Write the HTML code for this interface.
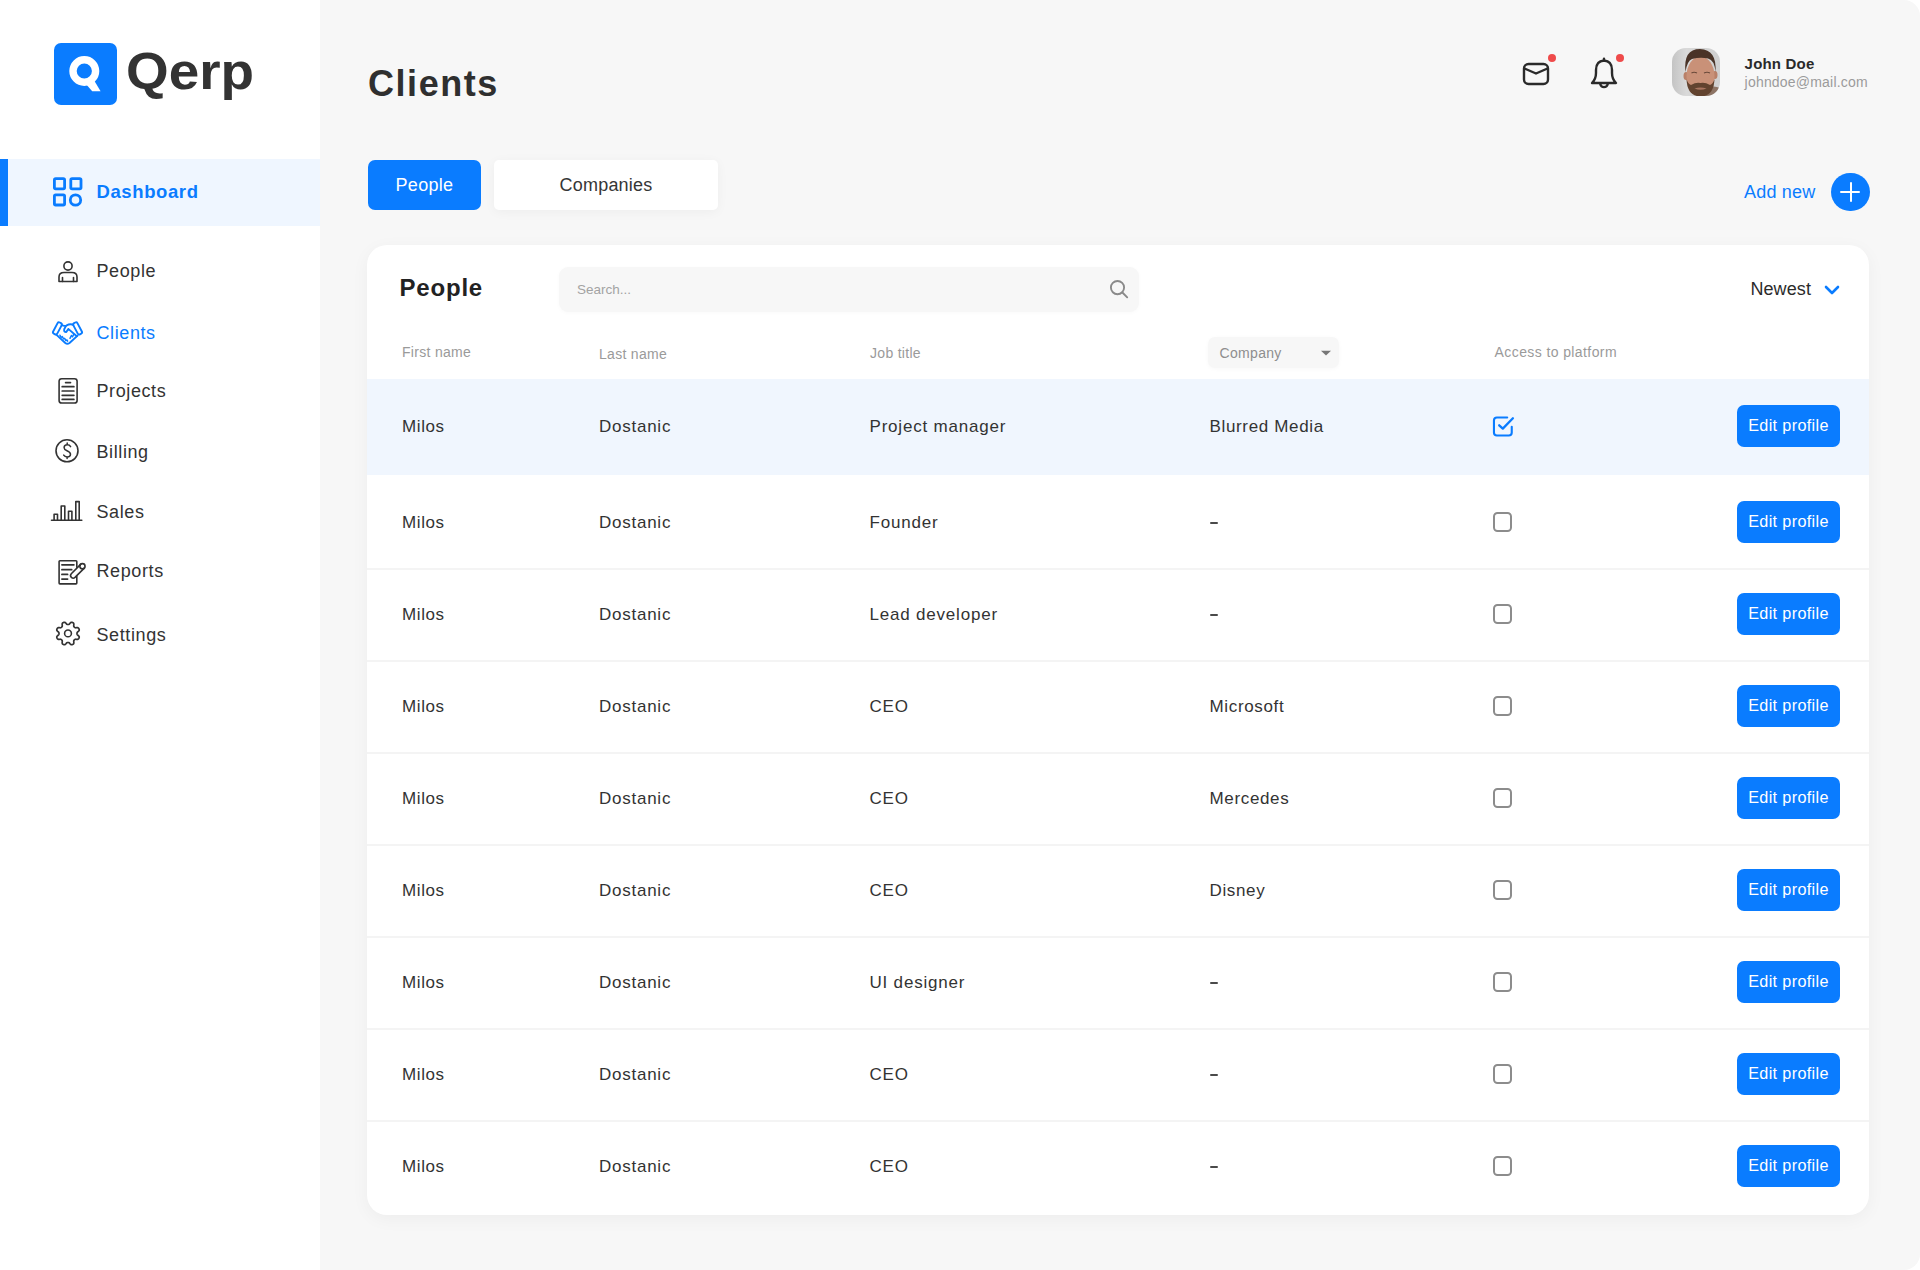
<!DOCTYPE html>
<html><head><meta charset="utf-8"><title>Qerp Clients</title>
<style>
html,body{margin:0;padding:0;}
body{width:1920px;height:1270px;position:relative;overflow:hidden;background:#fff;font-family:"Liberation Sans",sans-serif;}
.t{position:absolute;white-space:nowrap;line-height:1;}
.r{position:absolute;}
</style></head><body>
<div class="r" style="left:0px;top:0px;width:320px;height:1270px;background:#fff;"></div>
<div class="r" style="left:54px;top:43px;width:63px;height:62px;background:#0a7cff;border-radius:7px;"></div>
<svg class="r" style="left:0;top:0" width="130" height="120" viewBox="0 0 130 120">
<circle cx="84.3" cy="71" r="11.3" fill="none" stroke="#fff" stroke-width="7.4"/>
<polygon points="86.3,84.5 94.3,80.8 100.6,91.2 92.2,91.2" fill="#fff"/>
</svg>
<div class="t" style="left:125.5px;top:45.18px;font-size:52px;color:#333;font-weight:700;transform:scaleX(1.055);transform-origin:0 0;">Qerp</div>
<div class="r" style="left:0px;top:159px;width:320px;height:67px;background:#eff6ff;"></div>
<div class="r" style="left:0px;top:159px;width:8px;height:67px;background:#0a7cff;"></div>
<svg class="r" style="left:50px;top:174px" width="36" height="36" viewBox="0 0 36 36" fill="none" stroke="#0a7cff" stroke-width="2.8">
<rect x="4.4" y="4.6" width="10.2" height="10.2" rx="1.3"/><rect x="20.8" y="4.6" width="10.2" height="10.2" rx="1.3"/>
<rect x="4.4" y="20.8" width="10.2" height="10.2" rx="1.3"/><circle cx="25.5" cy="26" r="5.2"/>
</svg>
<div class="t" style="left:96.5px;top:183.34px;font-size:18.5px;color:#0a7cff;font-weight:700;letter-spacing:0.6px;">Dashboard</div>
<div class="t" style="left:96.5px;top:261.76px;font-size:18px;color:#333333;font-weight:400;letter-spacing:0.6px;">People</div>
<div class="t" style="left:96.5px;top:323.76px;font-size:18px;color:#0a7cff;font-weight:400;letter-spacing:0.6px;">Clients</div>
<div class="t" style="left:96.5px;top:382.16px;font-size:18px;color:#333333;font-weight:400;letter-spacing:0.6px;">Projects</div>
<div class="t" style="left:96.5px;top:442.56px;font-size:18px;color:#333333;font-weight:400;letter-spacing:0.6px;">Billing</div>
<div class="t" style="left:96.5px;top:502.96px;font-size:18px;color:#333333;font-weight:400;letter-spacing:0.6px;">Sales</div>
<div class="t" style="left:96.5px;top:562.46px;font-size:18px;color:#333333;font-weight:400;letter-spacing:0.6px;">Reports</div>
<div class="t" style="left:96.5px;top:625.76px;font-size:18px;color:#333333;font-weight:400;letter-spacing:0.6px;">Settings</div>
<svg class="r" style="left:0;top:0" width="100" height="700" viewBox="0 0 100 700" fill="none" stroke="#333" stroke-width="1.6" stroke-linejoin="round" stroke-linecap="round">
<!-- people -->
<circle cx="68" cy="266" r="4.1"/>
<path d="M59 281.5 V277 Q59 272.5 64 272.5 H72 Q77 272.5 77 277 V281.5 Z"/>
<path d="M62.5 281.5 V277.5 M73.5 281.5 V277.5"/>
<!-- projects -->
<rect x="59.1" y="378.7" width="18" height="24.3" rx="2.6"/>
<path stroke-width="1.7" d="M65.6 382.6 H70.5 M62.2 386.7 H73.9 M62.2 391 H73.9 M62.2 395.3 H73.9 M62.2 399.4 H73.9"/>
<!-- billing -->
<circle cx="67" cy="450.8" r="11"/>
<path stroke-width="1.5" d="M70.6 446.6 Q69.6 444.8 67.2 444.8 Q64.1 444.8 64.1 447.7 Q64.1 449.4 67 450.7 Q70.5 452.2 70.5 454.2 Q70.5 456.9 67.2 456.9 Q64.8 456.9 63.7 455.1 M67.2 443 V444.8 M67.1 456.9 V458.6"/>
<!-- sales -->
<path d="M51.5 520.2 H81.8"/>
<path d="M54.1 520.2 V514.2 H57.5 V520.2 M61.2 520.2 V506 H64.8 V520.2 M68.5 520.2 V511.2 H71.9 V520.2 M75.8 520.2 V501.6 H79.2 V520.2"/>
<!-- reports -->
<path d="M76.8 567.2 V561.6 Q76.8 560.8 76 560.8 H59.9 Q59.1 560.8 59.1 561.6 V583.1 Q59.1 583.9 59.9 583.9 H76 Q76.8 583.9 76.8 583.1 V576.3"/>
<path stroke-width="1.7" d="M61.9 564.8 H73.9 M61.9 569.7 H71.7 M61.9 574.4 H67.6 M61.9 579.1 H67.6"/>
<path d="M80.6 564.4 L71.3 573.7 Q69.6 575.6 71.4 577.4 Q73.2 579.1 75 577.4 L84.3 568.1"/>
<circle cx="82.45" cy="566.25" r="2.6"/>
<!-- settings -->
<circle cx="68" cy="633.4" r="3.4"/>
</svg>
<svg class="r" style="left:0;top:0" width="100" height="700" viewBox="0 0 100 700" fill="none" stroke="#333" stroke-width="1.7" stroke-linejoin="round">
<path d="M77.00 633.50 L77.01 633.85 L77.07 634.21 L77.23 634.59 L77.61 635.02 L78.25 635.54 L78.86 636.11 L79.17 636.65 L79.23 637.15 L79.15 637.61 L78.99 638.05 L78.79 638.47 L78.52 638.86 L78.13 639.17 L77.52 639.34 L76.69 639.31 L75.87 639.22 L75.30 639.25 L74.92 639.41 L74.62 639.62 L74.36 639.86 L74.12 640.12 L73.91 640.42 L73.75 640.80 L73.72 641.37 L73.81 642.19 L73.84 643.02 L73.67 643.63 L73.36 644.02 L72.97 644.29 L72.55 644.49 L72.11 644.65 L71.65 644.73 L71.15 644.67 L70.61 644.36 L70.04 643.75 L69.52 643.11 L69.09 642.73 L68.71 642.57 L68.35 642.51 L68.00 642.50 L67.65 642.51 L67.29 642.57 L66.91 642.73 L66.48 643.11 L65.96 643.75 L65.39 644.36 L64.85 644.67 L64.35 644.73 L63.89 644.65 L63.45 644.49 L63.03 644.29 L62.64 644.02 L62.33 643.63 L62.16 643.02 L62.19 642.19 L62.28 641.37 L62.25 640.80 L62.09 640.42 L61.88 640.12 L61.64 639.86 L61.38 639.62 L61.08 639.41 L60.70 639.25 L60.13 639.22 L59.31 639.31 L58.48 639.34 L57.87 639.17 L57.48 638.86 L57.21 638.47 L57.01 638.05 L56.85 637.61 L56.77 637.15 L56.83 636.65 L57.14 636.11 L57.75 635.54 L58.39 635.02 L58.77 634.59 L58.93 634.21 L58.99 633.85 L59.00 633.50 L58.99 633.15 L58.93 632.79 L58.77 632.41 L58.39 631.98 L57.75 631.46 L57.14 630.89 L56.83 630.35 L56.77 629.85 L56.85 629.39 L57.01 628.95 L57.21 628.53 L57.48 628.14 L57.87 627.83 L58.48 627.66 L59.31 627.69 L60.13 627.78 L60.70 627.75 L61.08 627.59 L61.38 627.38 L61.64 627.14 L61.88 626.88 L62.09 626.58 L62.25 626.20 L62.28 625.63 L62.19 624.81 L62.16 623.98 L62.33 623.37 L62.64 622.98 L63.03 622.71 L63.45 622.51 L63.89 622.35 L64.35 622.27 L64.85 622.33 L65.39 622.64 L65.96 623.25 L66.48 623.89 L66.91 624.27 L67.29 624.43 L67.65 624.49 L68.00 624.50 L68.35 624.49 L68.71 624.43 L69.09 624.27 L69.52 623.89 L70.04 623.25 L70.61 622.64 L71.15 622.33 L71.65 622.27 L72.11 622.35 L72.55 622.51 L72.97 622.71 L73.36 622.98 L73.67 623.37 L73.84 623.98 L73.81 624.81 L73.72 625.63 L73.75 626.20 L73.91 626.58 L74.12 626.88 L74.36 627.14 L74.62 627.38 L74.92 627.59 L75.30 627.75 L75.87 627.78 L76.69 627.69 L77.52 627.66 L78.13 627.83 L78.52 628.14 L78.79 628.53 L78.99 628.95 L79.15 629.39 L79.23 629.85 L79.17 630.35 L78.86 630.89 L78.25 631.46 L77.61 631.98 L77.23 632.41 L77.07 632.79 L77.01 633.15 Z"/></svg>
<svg class="r" style="left:0;top:0" width="100" height="400" viewBox="0 0 100 400" fill="none" stroke="#0a7cff" stroke-width="1.9" stroke-linejoin="round" stroke-linecap="round">
<rect x="-2.3" y="-6.3" width="4.6" height="12.6" rx="1.6" transform="translate(57.4 328.4) rotate(28)"/>
<rect x="-2.3" y="-6.3" width="4.6" height="12.6" rx="1.6" transform="translate(77.6 328.4) rotate(-28)"/>
<path d="M61.6 325 Q64 326.3 66.2 325.6 Q70.5 323.3 73.4 325"/>
<path d="M66 325.9 L64.2 329.3 Q63.7 332.2 66.3 332 L68.3 328.9 L76.8 336.2"/>
<path d="M56.3 334.6 L65.3 343 Q67.3 344.6 69.5 343 L77.6 335.6"/>
<path stroke-width="1.5" d="M59.9 335.2 L61.2 337.4 M62.3 336.6 L63.6 338.9 M64.6 338.3 L65.9 340.5 M66.9 340 L67.6 341.2 M71.4 335.5 L70 338.3 M73.6 334.6 L72.4 336.8"/>
</svg>
<div class="r" style="left:320px;top:0px;width:1600px;height:1270px;background:#f7f7f7;border-radius:0 16px 16px 0;"></div>
<div class="t" style="left:368px;top:65.93px;font-size:36px;color:#2f2f2f;font-weight:700;letter-spacing:1.55px;">Clients</div>
<div class="r" style="left:368px;top:160px;width:113px;height:50px;background:#0a7cff;border-radius:7px;"></div>
<div class="t" style="left:124.5px;width:600px;text-align:center;top:176.16px;font-size:18px;color:#fff;font-weight:400;letter-spacing:0.3px;">People</div>
<div class="r" style="left:494px;top:160px;width:224px;height:50px;background:#fff;border-radius:5px;box-shadow:0 2px 12px rgba(0,0,0,0.045);"></div>
<div class="t" style="left:306px;width:600px;text-align:center;top:176.16px;font-size:18px;color:#363636;font-weight:400;letter-spacing:0.2px;">Companies</div>
<svg class="r" style="left:1500px;top:40px" width="140" height="60" viewBox="1500 40 140 60" fill="none" stroke="#2a2a2a" stroke-width="2.4" stroke-linejoin="round" stroke-linecap="round">
<rect x="1524" y="64" width="24" height="20" rx="4.5"/>
<path d="M1524.5 68.5 L1536 73.5 L1547.5 68.5"/>
<path d="M1592 83 Q1596 79 1596 73 V70 Q1596 61 1604 60.5 Q1612 61 1612 70 V73 Q1612 79 1616 83 Z"/>
<path d="M1600.3 84.3 A3.8 3.6 0 0 0 1607.7 84.3"/><path d="M1604 58.8 V60.4"/>
</svg>
<div class="r" style="left:1548px;top:54px;width:8px;height:8px;background:#ef4b4b;border-radius:50%;"></div>
<div class="r" style="left:1616px;top:54px;width:8px;height:8px;background:#ef4b4b;border-radius:50%;"></div>
<svg class="r" style="left:1672px;top:48px" width="48" height="48" viewBox="0 0 48 48">
<defs><clipPath id="av"><rect x="0" y="0" width="48" height="48" rx="14"/></clipPath>
<linearGradient id="avbg" x1="0" y1="0" x2="1" y2="0"><stop offset="0" stop-color="#c4c4c4"/><stop offset="0.3" stop-color="#d9d9d9"/><stop offset="1" stop-color="#cfcfcf"/></linearGradient></defs>
<g clip-path="url(#av)">
<rect width="48" height="48" fill="url(#avbg)"/>
<path d="M34 40 Q42 37 48 40 V48 H30 Z" fill="#8d7465"/>
<ellipse cx="14" cy="28" rx="2.5" ry="4" fill="#b98068"/>
<ellipse cx="43" cy="27" rx="2.5" ry="4" fill="#b98068"/>
<ellipse cx="28.5" cy="28" rx="14" ry="19.5" fill="#c99178"/>
<path d="M13.5 24 Q11 1 28 1 Q45 1.5 43.5 24 Q42.5 12 36 10.5 Q28 9 20 11 Q15 13 13.5 24 Z" fill="#4a3327"/>
<path d="M14.5 31 Q15 48 28.5 48.5 Q42 48 42.5 31 Q41 36 38 37 Q33 34 28.5 35 Q24 34 19 37 Q16 36 14.5 31 Z" fill="#62432f"/>
<path d="M22.5 40.5 Q28.5 38.5 34.5 40.5 Q28.5 43 22.5 40.5 Z" fill="#a87560"/>
<path d="M19.5 25 Q22 23.5 25 25 M32 25 Q35 23.5 38 25" stroke="#6a4a3a" stroke-width="1.2" fill="none"/>
</g></svg>
<div class="t" style="left:1744.6px;top:55.90px;font-size:15px;color:#2a2a2a;font-weight:700;letter-spacing:0.2px;">John Doe</div>
<div class="t" style="left:1744.6px;top:75.15px;font-size:14px;color:#9b9b9b;font-weight:400;letter-spacing:0.2px;">johndoe@mail.com</div>
<div class="t" style="left:1744px;top:183.06px;font-size:18px;color:#0a7cff;font-weight:400;letter-spacing:0.2px;">Add new</div>
<div class="r" style="left:1831.3px;top:172.6px;width:38.6px;height:38.6px;background:#0a7cff;border-radius:50%;"></div>
<div class="r" style="left:1840.4px;top:190.85px;width:20px;height:2.6px;background:#fff;border-radius:1.3px;"></div>
<div class="r" style="left:1849.6px;top:182px;width:2.6px;height:19.8px;background:#fff;border-radius:1.3px;"></div>
<div class="r" style="left:367px;top:245px;width:1502px;height:970px;background:#fff;border-radius:20px;box-shadow:0 4px 18px rgba(0,0,0,0.045);overflow:hidden;"></div>
<div class="t" style="left:399.5px;top:276.08px;font-size:24px;color:#222;font-weight:700;letter-spacing:0.8px;">People</div>
<div class="r" style="left:558.5px;top:266.5px;width:580px;height:45.5px;background:#f7f7f7;border-radius:9px;box-shadow:0 1px 4px rgba(0,0,0,0.025);"></div>
<div class="t" style="left:577px;top:283.37px;font-size:13.5px;color:#a3a3a3;font-weight:400;">Search...</div>
<svg class="r" style="left:1100px;top:270px" width="40" height="40" viewBox="1100 270 40 40" fill="none" stroke="#8a8a8a" stroke-width="1.9" stroke-linecap="round">
<circle cx="1117.5" cy="287.6" r="6.6"/><path d="M1122.4 292.5 L1127.2 297.3"/></svg>
<div class="t" style="left:1750.4px;top:280.16px;font-size:18px;color:#2b2b2b;font-weight:400;letter-spacing:0.1px;">Newest</div>
<svg class="r" style="left:1820px;top:280px" width="24" height="20" viewBox="1820 280 24 20" fill="none" stroke="#0a7cff" stroke-width="2.6" stroke-linecap="round" stroke-linejoin="round">
<path d="M1826 287 L1832 293 L1838 287"/></svg>
<div class="t" style="left:402px;top:344.75px;font-size:14px;color:#9a9a9a;font-weight:400;letter-spacing:0.3px;">First name</div>
<div class="t" style="left:599px;top:346.95px;font-size:14px;color:#9a9a9a;font-weight:400;letter-spacing:0.3px;">Last name</div>
<div class="t" style="left:870px;top:346.15px;font-size:14px;color:#9a9a9a;font-weight:400;letter-spacing:0.3px;">Job title</div>
<div class="r" style="left:1207.5px;top:337px;width:131px;height:31px;background:#f7f7f7;border-radius:7px;box-shadow:0 1px 4px rgba(0,0,0,0.03);"></div>
<div class="t" style="left:1219.6px;top:345.65px;font-size:14px;color:#8e8e8e;font-weight:400;letter-spacing:0.3px;">Company</div>
<svg class="r" style="left:1318px;top:348px" width="16" height="10" viewBox="1318 348 16 10"><path d="M1321 350.8 L1331 350.8 L1326 355.6 Z" fill="#777"/></svg>
<div class="t" style="left:1494.6px;top:345.05px;font-size:14px;color:#9a9a9a;font-weight:400;letter-spacing:0.4px;">Access to platform</div>
<div class="r" style="left:367px;top:378.5px;width:1502px;height:96px;background:#f0f6fe;"></div>
<div class="r" style="left:367px;top:568.0px;width:1502px;height:2px;background:#f4f4f4;"></div>
<div class="r" style="left:367px;top:660.0px;width:1502px;height:2px;background:#f4f4f4;"></div>
<div class="r" style="left:367px;top:752.0px;width:1502px;height:2px;background:#f4f4f4;"></div>
<div class="r" style="left:367px;top:844.0px;width:1502px;height:2px;background:#f4f4f4;"></div>
<div class="r" style="left:367px;top:936.0px;width:1502px;height:2px;background:#f4f4f4;"></div>
<div class="r" style="left:367px;top:1028.0px;width:1502px;height:2px;background:#f4f4f4;"></div>
<div class="r" style="left:367px;top:1120.0px;width:1502px;height:2px;background:#f4f4f4;"></div>
<div class="t" style="left:402px;top:418.01px;font-size:17px;color:#333;font-weight:400;letter-spacing:0.6px;">Milos</div>
<div class="t" style="left:599px;top:418.01px;font-size:17px;color:#333;font-weight:400;letter-spacing:0.75px;">Dostanic</div>
<div class="t" style="left:869.5px;top:418.01px;font-size:17px;color:#333;font-weight:400;letter-spacing:0.8px;">Project manager</div>
<div class="t" style="left:1209.5px;top:418.01px;font-size:17px;color:#333;font-weight:400;letter-spacing:0.65px;">Blurred Media</div>
<svg class="r" style="left:1488px;top:411.80px" width="32" height="28" viewBox="0 0 32 28" fill="none" stroke="#0a7cff" stroke-width="2.1" stroke-linecap="round" stroke-linejoin="round">
<path d="M23.75 14.8 V20.5 Q23.75 23.45 20.8 23.45 H8.9 Q5.95 23.45 5.95 20.5 V8.4 Q5.95 5.45 8.9 5.45 H19.2"/>
<path stroke-width="2.3" d="M11.2 13.3 L14.8 16.6 L24.9 6.2"/></svg>
<div class="r" style="left:1737px;top:404.8px;width:103px;height:42px;background:#0a7cff;border-radius:7px;"></div>
<div class="t" style="left:1488.5px;width:600px;text-align:center;top:417.09px;font-size:16.2px;color:#fff;font-weight:400;letter-spacing:0.35px;">Edit profile</div>
<div class="t" style="left:402px;top:513.96px;font-size:17px;color:#333;font-weight:400;letter-spacing:0.6px;">Milos</div>
<div class="t" style="left:599px;top:513.96px;font-size:17px;color:#333;font-weight:400;letter-spacing:0.75px;">Dostanic</div>
<div class="t" style="left:869.5px;top:513.96px;font-size:17px;color:#333;font-weight:400;letter-spacing:0.8px;">Founder</div>
<div class="r" style="left:1210px;top:521.85px;width:8px;height:1.9px;background:#4a4a4a;border-radius:1px;"></div>
<div class="r" style="left:1492.5px;top:512.05px;width:19.5px;height:19.5px;box-sizing:border-box;border:2px solid #8c8c8c;border-radius:4.5px;"></div>
<div class="r" style="left:1737px;top:500.75px;width:103px;height:42px;background:#0a7cff;border-radius:7px;"></div>
<div class="t" style="left:1488.5px;width:600px;text-align:center;top:513.04px;font-size:16.2px;color:#fff;font-weight:400;letter-spacing:0.35px;">Edit profile</div>
<div class="t" style="left:402px;top:605.96px;font-size:17px;color:#333;font-weight:400;letter-spacing:0.6px;">Milos</div>
<div class="t" style="left:599px;top:605.96px;font-size:17px;color:#333;font-weight:400;letter-spacing:0.75px;">Dostanic</div>
<div class="t" style="left:869.5px;top:605.96px;font-size:17px;color:#333;font-weight:400;letter-spacing:0.8px;">Lead developer</div>
<div class="r" style="left:1210px;top:613.85px;width:8px;height:1.9px;background:#4a4a4a;border-radius:1px;"></div>
<div class="r" style="left:1492.5px;top:604.05px;width:19.5px;height:19.5px;box-sizing:border-box;border:2px solid #8c8c8c;border-radius:4.5px;"></div>
<div class="r" style="left:1737px;top:592.75px;width:103px;height:42px;background:#0a7cff;border-radius:7px;"></div>
<div class="t" style="left:1488.5px;width:600px;text-align:center;top:605.04px;font-size:16.2px;color:#fff;font-weight:400;letter-spacing:0.35px;">Edit profile</div>
<div class="t" style="left:402px;top:697.96px;font-size:17px;color:#333;font-weight:400;letter-spacing:0.6px;">Milos</div>
<div class="t" style="left:599px;top:697.96px;font-size:17px;color:#333;font-weight:400;letter-spacing:0.75px;">Dostanic</div>
<div class="t" style="left:869.5px;top:697.96px;font-size:17px;color:#333;font-weight:400;letter-spacing:0.8px;">CEO</div>
<div class="t" style="left:1209.5px;top:697.96px;font-size:17px;color:#333;font-weight:400;letter-spacing:0.65px;">Microsoft</div>
<div class="r" style="left:1492.5px;top:696.05px;width:19.5px;height:19.5px;box-sizing:border-box;border:2px solid #8c8c8c;border-radius:4.5px;"></div>
<div class="r" style="left:1737px;top:684.75px;width:103px;height:42px;background:#0a7cff;border-radius:7px;"></div>
<div class="t" style="left:1488.5px;width:600px;text-align:center;top:697.04px;font-size:16.2px;color:#fff;font-weight:400;letter-spacing:0.35px;">Edit profile</div>
<div class="t" style="left:402px;top:789.96px;font-size:17px;color:#333;font-weight:400;letter-spacing:0.6px;">Milos</div>
<div class="t" style="left:599px;top:789.96px;font-size:17px;color:#333;font-weight:400;letter-spacing:0.75px;">Dostanic</div>
<div class="t" style="left:869.5px;top:789.96px;font-size:17px;color:#333;font-weight:400;letter-spacing:0.8px;">CEO</div>
<div class="t" style="left:1209.5px;top:789.96px;font-size:17px;color:#333;font-weight:400;letter-spacing:0.65px;">Mercedes</div>
<div class="r" style="left:1492.5px;top:788.05px;width:19.5px;height:19.5px;box-sizing:border-box;border:2px solid #8c8c8c;border-radius:4.5px;"></div>
<div class="r" style="left:1737px;top:776.75px;width:103px;height:42px;background:#0a7cff;border-radius:7px;"></div>
<div class="t" style="left:1488.5px;width:600px;text-align:center;top:789.04px;font-size:16.2px;color:#fff;font-weight:400;letter-spacing:0.35px;">Edit profile</div>
<div class="t" style="left:402px;top:881.96px;font-size:17px;color:#333;font-weight:400;letter-spacing:0.6px;">Milos</div>
<div class="t" style="left:599px;top:881.96px;font-size:17px;color:#333;font-weight:400;letter-spacing:0.75px;">Dostanic</div>
<div class="t" style="left:869.5px;top:881.96px;font-size:17px;color:#333;font-weight:400;letter-spacing:0.8px;">CEO</div>
<div class="t" style="left:1209.5px;top:881.96px;font-size:17px;color:#333;font-weight:400;letter-spacing:0.65px;">Disney</div>
<div class="r" style="left:1492.5px;top:880.05px;width:19.5px;height:19.5px;box-sizing:border-box;border:2px solid #8c8c8c;border-radius:4.5px;"></div>
<div class="r" style="left:1737px;top:868.75px;width:103px;height:42px;background:#0a7cff;border-radius:7px;"></div>
<div class="t" style="left:1488.5px;width:600px;text-align:center;top:881.04px;font-size:16.2px;color:#fff;font-weight:400;letter-spacing:0.35px;">Edit profile</div>
<div class="t" style="left:402px;top:973.96px;font-size:17px;color:#333;font-weight:400;letter-spacing:0.6px;">Milos</div>
<div class="t" style="left:599px;top:973.96px;font-size:17px;color:#333;font-weight:400;letter-spacing:0.75px;">Dostanic</div>
<div class="t" style="left:869.5px;top:973.96px;font-size:17px;color:#333;font-weight:400;letter-spacing:0.8px;">UI designer</div>
<div class="r" style="left:1210px;top:981.85px;width:8px;height:1.9px;background:#4a4a4a;border-radius:1px;"></div>
<div class="r" style="left:1492.5px;top:972.05px;width:19.5px;height:19.5px;box-sizing:border-box;border:2px solid #8c8c8c;border-radius:4.5px;"></div>
<div class="r" style="left:1737px;top:960.75px;width:103px;height:42px;background:#0a7cff;border-radius:7px;"></div>
<div class="t" style="left:1488.5px;width:600px;text-align:center;top:973.04px;font-size:16.2px;color:#fff;font-weight:400;letter-spacing:0.35px;">Edit profile</div>
<div class="t" style="left:402px;top:1065.96px;font-size:17px;color:#333;font-weight:400;letter-spacing:0.6px;">Milos</div>
<div class="t" style="left:599px;top:1065.96px;font-size:17px;color:#333;font-weight:400;letter-spacing:0.75px;">Dostanic</div>
<div class="t" style="left:869.5px;top:1065.96px;font-size:17px;color:#333;font-weight:400;letter-spacing:0.8px;">CEO</div>
<div class="r" style="left:1210px;top:1073.85px;width:8px;height:1.9px;background:#4a4a4a;border-radius:1px;"></div>
<div class="r" style="left:1492.5px;top:1064.05px;width:19.5px;height:19.5px;box-sizing:border-box;border:2px solid #8c8c8c;border-radius:4.5px;"></div>
<div class="r" style="left:1737px;top:1052.75px;width:103px;height:42px;background:#0a7cff;border-radius:7px;"></div>
<div class="t" style="left:1488.5px;width:600px;text-align:center;top:1065.04px;font-size:16.2px;color:#fff;font-weight:400;letter-spacing:0.35px;">Edit profile</div>
<div class="t" style="left:402px;top:1157.96px;font-size:17px;color:#333;font-weight:400;letter-spacing:0.6px;">Milos</div>
<div class="t" style="left:599px;top:1157.96px;font-size:17px;color:#333;font-weight:400;letter-spacing:0.75px;">Dostanic</div>
<div class="t" style="left:869.5px;top:1157.96px;font-size:17px;color:#333;font-weight:400;letter-spacing:0.8px;">CEO</div>
<div class="r" style="left:1210px;top:1165.85px;width:8px;height:1.9px;background:#4a4a4a;border-radius:1px;"></div>
<div class="r" style="left:1492.5px;top:1156.05px;width:19.5px;height:19.5px;box-sizing:border-box;border:2px solid #8c8c8c;border-radius:4.5px;"></div>
<div class="r" style="left:1737px;top:1144.75px;width:103px;height:42px;background:#0a7cff;border-radius:7px;"></div>
<div class="t" style="left:1488.5px;width:600px;text-align:center;top:1157.04px;font-size:16.2px;color:#fff;font-weight:400;letter-spacing:0.35px;">Edit profile</div>
</body></html>
